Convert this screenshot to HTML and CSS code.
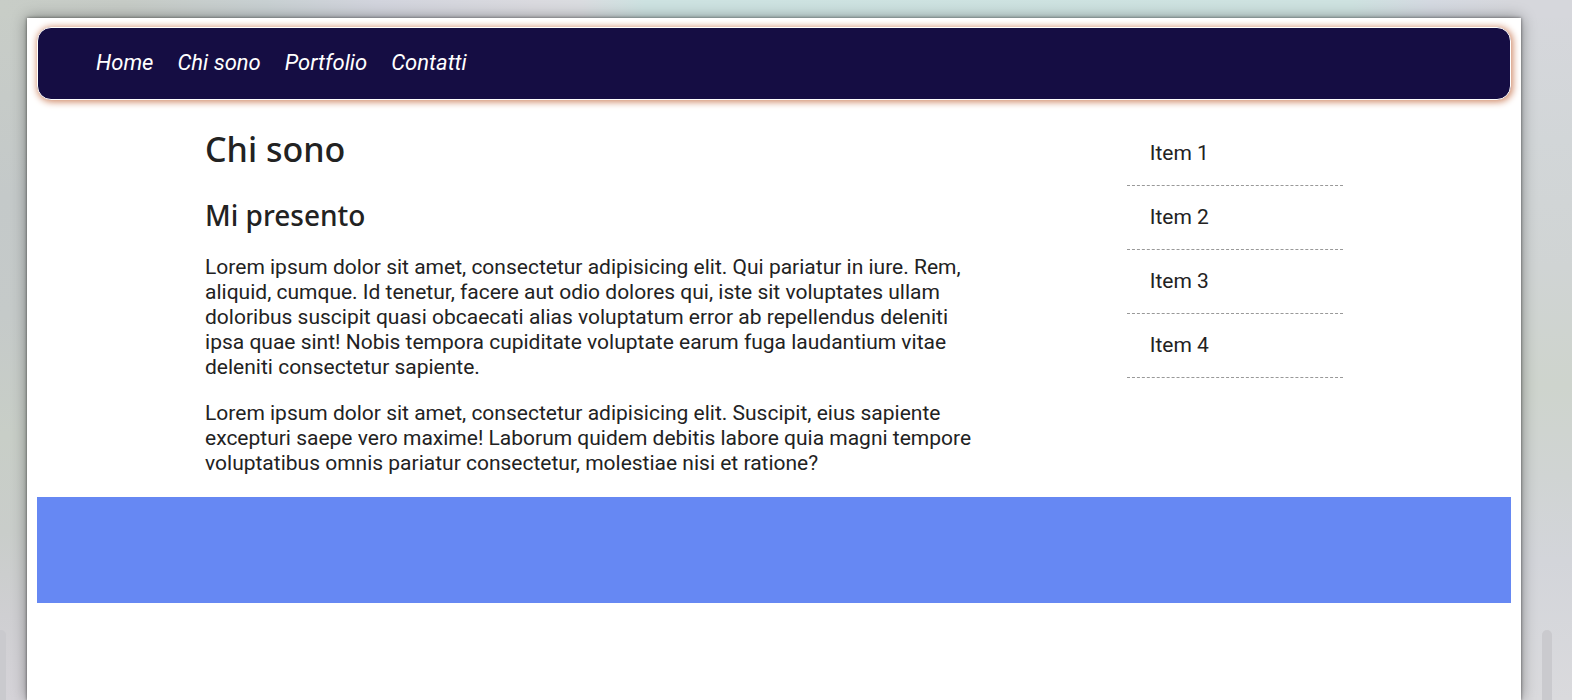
FILE: index.html
```
<!DOCTYPE html>
<html lang="it">
<head>
<meta charset="utf-8">
<title>Chi sono</title>
<link rel="stylesheet" href="styles.css">
</head>
<body>
<div class="page">
  <header class="header">
    <nav class="nav">
      <a href="#home">Home</a>
      <a href="#chi-sono">Chi sono</a>
      <a href="#portfolio">Portfolio</a>
      <a href="#contatti">Contatti</a>
    </nav>
  </header>
  <div class="container">
    <main class="content" id="chi-sono">
      <h1>Chi sono</h1>
      <h2>Mi presento</h2>
      <p>Lorem ipsum dolor sit amet, consectetur adipisicing elit. Qui pariatur in iure. Rem, aliquid, cumque. Id tenetur, facere aut odio dolores qui, iste sit voluptates ullam doloribus suscipit quasi obcaecati alias voluptatum error ab repellendus deleniti ipsa quae sint! Nobis tempora cupiditate voluptate earum fuga laudantium vitae deleniti consectetur sapiente.</p>
      <p>Lorem ipsum dolor sit amet, consectetur adipisicing elit. Suscipit, eius sapiente excepturi saepe vero maxime! Laborum quidem debitis labore quia magni tempore voluptatibus omnis pariatur consectetur, molestiae nisi et ratione?</p>
    </main>
    <aside class="sidebar">
      <ul class="items">
        <li>Item 1</li>
        <li>Item 2</li>
        <li>Item 3</li>
        <li>Item 4</li>
      </ul>
    </aside>
  </div>
  <footer class="footer"></footer>
</div>
<div class="thumb thumb-left"></div>
<div class="thumb thumb-right"></div>
</body>
</html>
```
FILE: styles.css
```
* {
  box-sizing: border-box;
}

body {
  margin: 0;
  min-height: 100vh;
  display: flex;
  position: relative;
  overflow: hidden;
  padding: 18px 51px 0 27px;
  color: #222;
  font: 21px/25px Roboto, sans-serif;
  background:
    linear-gradient(90deg, #c8cdc7 0, #c6cbc6 8%, #c8d0d2 17%, #d2d4dd 24%, #dadadf 34%, #dadce0 37%, #cde2e1 41%, #cee2e0 86%, #d4d9e1 91%, #d6d7dc 96%, #d6d7dc 100%) top / 100% 18px no-repeat,
    linear-gradient(180deg, #c8cdc7 0, #c4c9c9 28%, #c5cac9 45%, #c8cec7 62%, #c9cdca 76%, #cfcfd2 88%, #d5d3d8 100%) left / 27px 100% no-repeat,
    linear-gradient(180deg, #d6d7dc 0, #d2d6d8 20%, #d0d4d4 38%, #ced4cd 55%, #d0d4d3 68%, #d3d5da 80%, #dadadd 100%);
}

.page {
  flex: 1;
  padding: 9px 10px;
  background: #fff;
  box-shadow: 0 0 14px rgba(0, 0, 0, 0.4), 0 0 3px rgba(0, 0, 0, 0.5);
}

.header {
  padding: 22px 58px 24px;
  border: 1px solid #fff;
  border-radius: 14px;
  background: #150d43;
  box-shadow: 1px 1px 7px 1px #d08a68;
}

.nav {
  display: flex;
  gap: 24px;
}

.nav a {
  color: #fff;
  font-size: 22px;
  font-style: italic;
  text-decoration: none;
}

.container {
  display: grid;
  grid-template-columns: 68% 19%;
  justify-content: space-between;
  width: 77.2%;
  margin: 0 auto;
  padding: 22px 0 21px;
}

h1,
h2,
p {
  margin: 0;
}

h1,
h2 {
  font-family: "Noto Sans", sans-serif;
  font-weight: 500;
}

h1 {
  margin: 7px 0 30px;
  font-size: 34px;
  line-height: 40px;
}

h2 {
  margin-bottom: 24px;
  font-size: 28px;
  line-height: 32px;
}

p + p {
  margin-top: 21px;
}

.items {
  margin: 0;
  padding: 0;
  list-style: none;
}

.items li {
  padding: 19px 23px;
  border-bottom: 1px dashed #999;
}

.footer {
  height: 106px;
  background: #6688f3;
}

.thumb {
  position: absolute;
  bottom: 0;
  width: 10px;
  height: 10%;
  border-radius: 5px 5px 0 0;
  background: #cacace;
}

.thumb-left {
  left: -4px;
}

.thumb-right {
  right: 20px;
}
```
